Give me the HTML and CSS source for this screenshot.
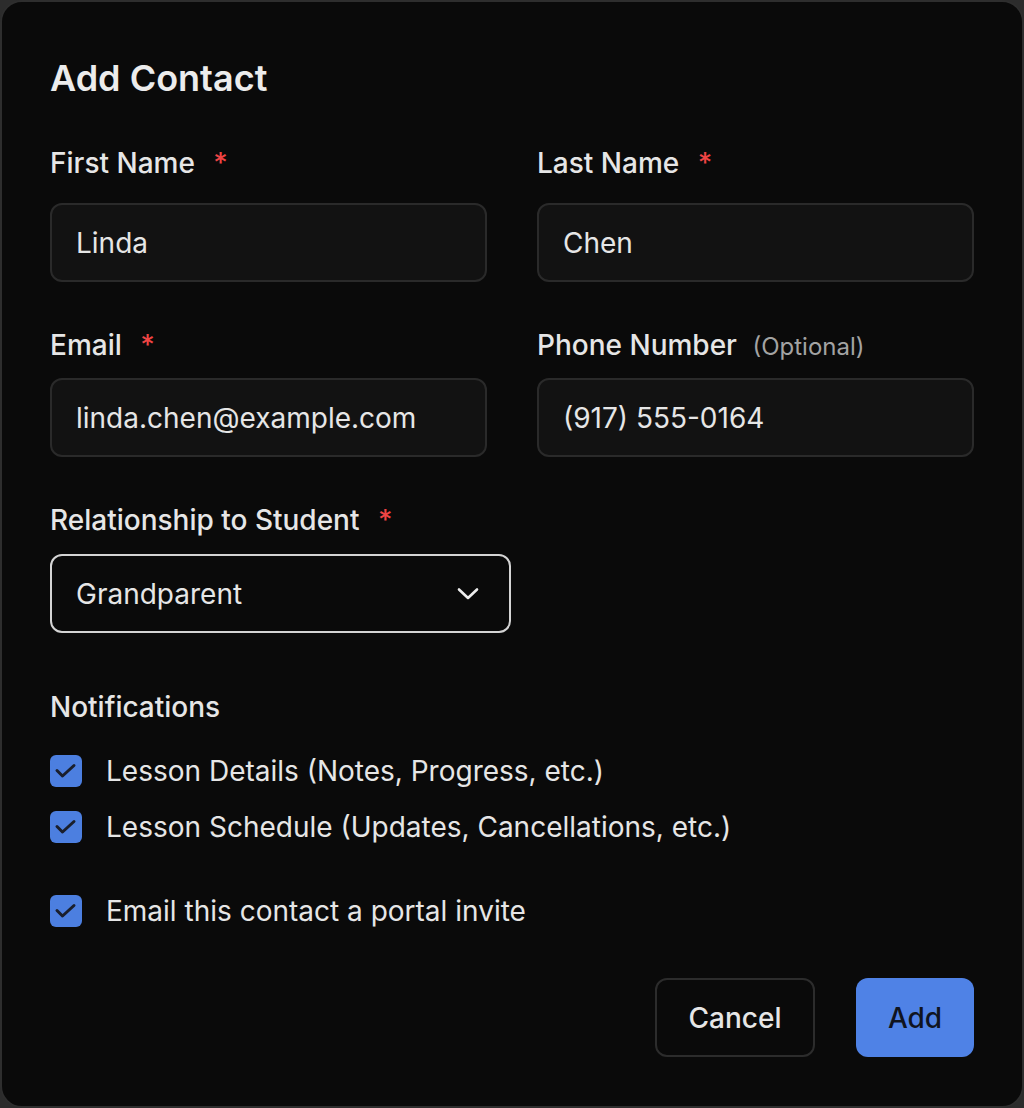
FILE: index.html
```html
<!DOCTYPE html>
<html>
<head>
<meta charset="utf-8">
<link rel="stylesheet" href="styles.css">
</head>
<body>
<div class="dialog">
  <h1 class="title">Add Contact</h1>

  <div class="row row-1">
    <div class="field">
      <div class="label">First Name <span class="req">*</span></div>
      <div class="input">Linda</div>
    </div>
    <div class="field">
      <div class="label">Last Name <span class="req">*</span></div>
      <div class="input">Chen</div>
    </div>
  </div>

  <div class="row row-2">
    <div class="field">
      <div class="label">Email <span class="req">*</span></div>
      <div class="input">linda.chen@example.com</div>
    </div>
    <div class="field">
      <div class="label">Phone Number <span class="opt">(Optional)</span></div>
      <div class="input">(917) 555-0164</div>
    </div>
  </div>

  <div class="row row-3">
    <div class="field field-select">
      <div class="label">Relationship to Student <span class="req">*</span></div>
      <div class="select">
        <span>Grandparent</span>
        <svg class="chev" width="22" height="14" viewBox="0 0 22 14"><path d="M2 2.5 L11 11 L20 2.5" fill="none" stroke="#ededed" stroke-width="2.6" stroke-linecap="round" stroke-linejoin="round"/></svg>
      </div>
    </div>
  </div>

  <div class="section-label">Notifications</div>
  <div class="check check-1">
    <span class="box"><svg width="32" height="32" viewBox="0 0 32 32"><path d="M7 15.5 L12.5 21 L24 10.5" fill="none" stroke="#1a1f2c" stroke-width="3" stroke-linecap="round" stroke-linejoin="round"/></svg></span>
    <span class="check-text">Lesson Details (Notes, Progress, etc.)</span>
  </div>
  <div class="check check-2">
    <span class="box"><svg width="32" height="32" viewBox="0 0 32 32"><path d="M7 15.5 L12.5 21 L24 10.5" fill="none" stroke="#1a1f2c" stroke-width="3" stroke-linecap="round" stroke-linejoin="round"/></svg></span>
    <span class="check-text">Lesson Schedule (Updates, Cancellations, etc.)</span>
  </div>
  <div class="check check-3">
    <span class="box"><svg width="32" height="32" viewBox="0 0 32 32"><path d="M7 15.5 L12.5 21 L24 10.5" fill="none" stroke="#1a1f2c" stroke-width="3" stroke-linecap="round" stroke-linejoin="round"/></svg></span>
    <span class="check-text">Email this contact a portal invite</span>
  </div>

  <div class="actions">
    <button class="btn btn-cancel">Cancel</button>
    <button class="btn btn-add">Add</button>
  </div>
</div>
</body>
</html>
```

FILE: styles.css
```css
* { box-sizing: border-box; }
html, body { margin: 0; padding: 0; }
body {
  background: #2c2c2c;
  font-family: Inter, "Noto Sans", sans-serif;
  color: #e6e6e6;
}
.dialog {
  width: 1024px;
  height: 1108px;
  background: #0a0a0a;
  border: 2px solid #2e2e2e;
  border-radius: 22px;
  padding: 56px 48px 0 48px;
  display: flex;
  flex-direction: column;
}
.title {
  margin: 0;
  font-size: 36px;
  line-height: 40px;
  font-weight: 600;
  color: #ececec;
}
.row {
  display: grid;
  grid-template-columns: 437px 437px;
  column-gap: 50px;
}
.row-1 { margin-top: 49px; }
.row-1 .label { margin-bottom: 24px; }
.row-2 { margin-top: 47px; }
.row-2 .label { margin-bottom: 17px; }
.row-3 { margin-top: 47px; }
.row-3 .label { margin-bottom: 18px; }
.label {
  font-size: 28px;
  line-height: 32px;
  height: 32px;
  font-weight: 500;
  color: #e6e6e6;
  white-space: nowrap;
}
.req {
  color: #ef4444;
  margin-left: 11px;
}
.opt {
  font-size: 24px;
  line-height: 1;
  font-weight: 400;
  color: #a3a3a3;
  margin-left: 8px;
}
.input {
  height: 79px;
  border: 2px solid #2a2a2a;
  background: #121212;
  border-radius: 12px;
  padding: 0 24px;
  display: flex;
  align-items: center;
  font-size: 28px;
  color: #e6e6e6;
}
.field-select { grid-column: 1; }
.select {
  width: 461px;
  height: 79px;
  border: 2px solid #d4d4d4;
  background: #0a0a0a;
  border-radius: 12px;
  padding: 0 30px 0 24px;
  display: flex;
  align-items: center;
  justify-content: space-between;
  font-size: 28px;
  color: #e6e6e6;
}
.section-label {
  margin-top: 58px;
  font-size: 28px;
  line-height: 32px;
  font-weight: 500;
}
.check {
  display: flex;
  align-items: center;
  gap: 24px;
  height: 32px;
}
.check-1 { margin-top: 32px; }
.check-2 { margin-top: 24px; }
.check-3 { margin-top: 52px; }
.box {
  width: 32px;
  height: 32px;
  border-radius: 6px;
  background: #4c7fe0;
  display: flex;
  flex: none;
}
.check-text {
  font-size: 28px;
  color: #e6e6e6;
  white-space: nowrap;
}
.actions {
  margin-top: 51px;
  display: flex;
  justify-content: flex-end;
  gap: 41px;
}
.btn {
  height: 79px;
  border-radius: 12px;
  font-family: Inter, "Noto Sans", sans-serif;
  font-size: 28px;
  font-weight: 500;
  padding: 0;
  cursor: pointer;
}
.btn-cancel {
  width: 160px;
  background: #0a0a0a;
  border: 2px solid #2c2c2c;
  color: #e6e6e6;
}
.btn-add {
  width: 118px;
  background: #4f82e6;
  border: none;
  color: #10141f;
}
```
